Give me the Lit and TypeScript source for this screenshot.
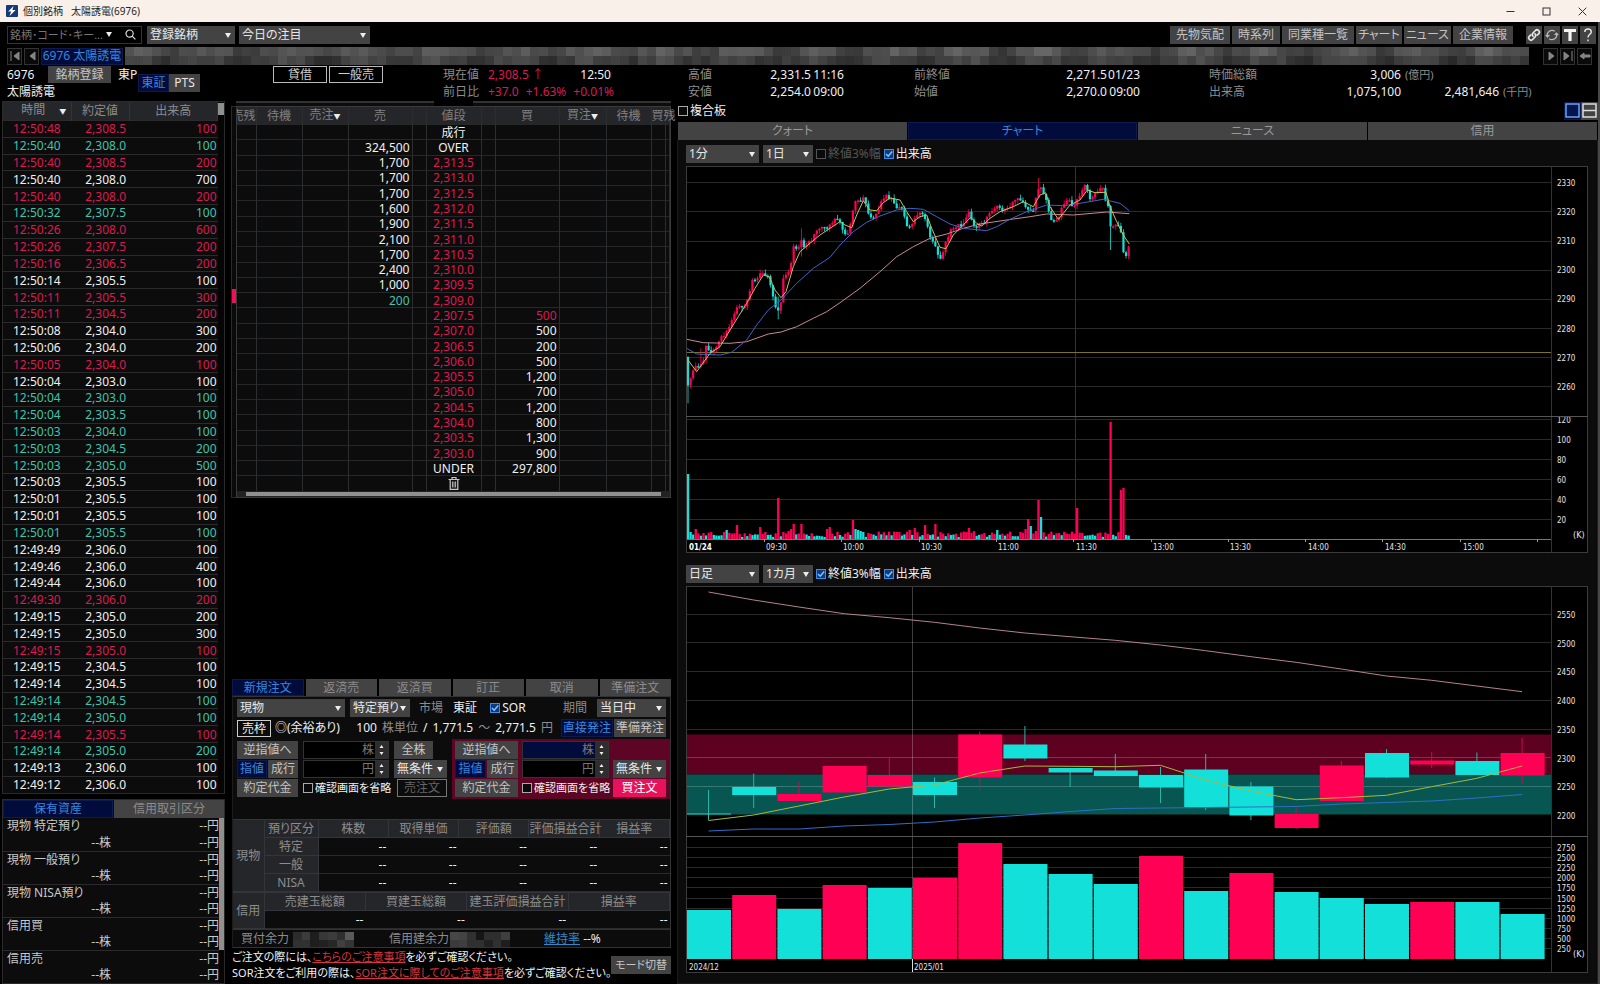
import { LitElement, html, svg, css } from "lit";
import { customElement } from "lit/decorators.js";

const RED = "#ff0055";
const TEAL = "#14e0da";

/* ---------- shared look ---------- */
const base = css`
  * { box-sizing: border-box; }
  :host {
    font-family: "Noto Sans", "Noto Sans CJK JP", sans-serif;
    font-size: 12px;
    line-height: 16px;
    font-feature-settings: "palt";
    color: #f0f0f0;
    white-space: nowrap;
  }
  button, select, input { font: inherit; font-feature-settings: inherit; color: inherit; margin: 0; padding: 0; border: 0; border-radius: 0; outline: 0; }
  button { display: flex; align-items: center; justify-content: center; background: #434343; color: #c4c4c4; height: 18px; padding: 0 6px; line-height: 16px; white-space: nowrap; }
  button.on { background: #020c3c; color: #3787dd; box-shadow: inset 0 0 0 1px #0c1a4c; }
  table { border-collapse: collapse; border-spacing: 0; table-layout: fixed; width: 100%; }
  th, td { padding: 0; font-weight: 400; }
  .sel { position: relative; display: block; height: 18px; background: #434343; }
  .sel select { appearance: none; width: 100%; height: 18px; padding: 0 10px 0 3px; background: transparent; color: #e8e8e8; line-height: 16px; }
  .sel::after { content: ""; position: absolute; right: 4px; top: 7px; border: 3px solid transparent; border-top: 5px solid #eee; border-bottom: 0; pointer-events: none; }
  .tick { display: flex; align-items: center; gap: 2px; }
  .tick input { appearance: none; flex: none; width: 10px; height: 10px; border: 1px solid #aaa; background: #0a0a0a; }
  .tick input:checked { border-color: #3a8ee6; background: #123a78 url('data:image/svg+xml,<svg xmlns="http://www.w3.org/2000/svg" viewBox="0 0 8 8"><path d="M1 4l2.2 2.2L7.2 1.6" fill="none" stroke="%237cc0ff" stroke-width="1.6"/></svg>'); }
  .tick.dim { color: #555; }
  .tick.dim input { border-color: #555; }
  .r { color: #dc1a52; }
  .t { color: #3fc4ae; }
  .w { color: #f0f0f0; }
  .g { color: #8c8c8c; }
`;

const dropdown = (label: string, value: string, cls = "") => html`
  <label class="sel ${cls}"><select aria-label=${label}><option>${value}</option></select></label>`;
const tick = (text: string, checked = false, cls = "") => html`
  <label class="tick ${cls}"><input type="checkbox" .checked=${checked}><span>${text}</span></label>`;

/* masked values are shown as a mosaic of grey cells */
const mosaic = (cols: number, cell: number, seed: number, low: number, high: number) => {
  const cells = [];
  for (let r = 0; r < 2; r++) {
    for (let c = 0; c < cols; c++) {
      const n = Math.abs(Math.sin((c + 1) * 12.9898 + r * 4.1 + seed) * 43758.5453) % 1;
      const wave = 0.5 + 0.5 * Math.sin(c * 0.75 + seed);
      const g = Math.round((low + (0.5 * n + 0.5 * wave) * (high - low)) * (r ? 0.8 : 1));
      cells.push(svg`<rect x=${c * cell} y=${r * 9} width=${cell} height="9" fill="rgb(${g},${g},${g + 1})"/>`);
    }
  }
  return html`<svg class="mosaic" viewBox="0 0 ${cols * cell} 18" preserveAspectRatio="none" shape-rendering="crispEdges" aria-hidden="true">${cells}</svg>`;
};

/* ---------- executions ---------- */
const TRADES = `50:48 8.5 r 100|50:40 8.0 t 100|50:40 8.5 r 200|50:40 8.0 w 700|50:40 8.0 r 200|50:32 7.5 t 100|50:26 8.0 r 600|50:26 7.5 r 200|50:16 6.5 r 200|50:14 5.5 w 100|50:11 5.5 r 300|50:11 4.5 r 200|50:08 4.0 w 300|50:06 4.0 w 200|50:05 4.0 r 100|50:04 3.0 w 100|50:04 3.0 t 100|50:04 3.5 t 100|50:03 4.0 t 100|50:03 4.5 t 200|50:03 5.0 t 500|50:03 5.5 w 100|50:01 5.5 w 100|50:01 5.5 w 100|50:01 5.5 t 100|49:49 6.0 w 100|49:46 6.0 w 400|49:44 6.0 w 100|49:30 6.0 r 200|49:15 5.0 w 200|49:15 5.0 w 300|49:15 5.0 r 100|49:15 4.5 w 100|49:14 4.5 w 100|49:14 4.5 t 100|49:14 5.0 t 100|49:14 5.5 r 100|49:14 5.0 t 200|49:13 6.0 w 100|49:12 6.0 w 100`
  .split("|").map((s) => s.split(" "));

@customElement("trade-tape")
class TradeTape extends LitElement {
  static styles = [base, css`
    :host { display: flex; border: 1px solid #2a2a2a; background: #0c0c0c; }
    .wrap { flex: 1; min-width: 0; }
    table { height: 100%; }
    .c1 { width: 68px; } .c2 { width: 58px; }
    thead th { height: 18px; background: #25262a; color: #8c8c8c; border-right: 1px solid #33343a; line-height: 16px; }
    thead span { font-size: 7px; color: #eee; margin-left: 14px; margin-right: -14px; }
    tbody tr { border-top: 1px solid #2b2b2b; }
    td { text-align: right; line-height: 15px; }
    td:first-child { text-align: left; padding-left: 10px; }
    td:nth-child(2) { padding-right: 3px; }
    td:last-child { padding-right: 1px; }
    .bar { width: 6px; background: #050505; padding-top: 1px; }
    .thumb { height: 12px; background: #8f8f8f; }
  `];
  render() {
    return html`<div class="wrap"><table>
      <colgroup><col class="c1"><col class="c2"><col></colgroup>
      <thead><tr><th>時間<span>▼</span></th><th>約定値</th><th>出来高</th></tr></thead>
      <tbody>${TRADES.map(([t, p, c, v]) => html`<tr class=${c}><td>12:${t}</td><td>2,30${p}</td><td>${v}</td></tr>`)}</tbody>
    </table></div><div class="bar"><div class="thumb"></div></div>`;
  }
}

@customElement("holdings-list")
class HoldingsList extends LitElement {
  static styles = [base, css`
    :host { display: block; border: 1px solid #2a2a2a; background: #0c0c0c; }
    .tabs { display: grid; grid-template-columns: 1fr 1fr; gap: 1px; }
    .tabs button { color: #8c8c8c; }
    .tabs button.on { color: #3787dd; }
    .body { display: flex; }
    .list { flex: 1; }
    .item { display: grid; grid-template-columns: 107px 1fr; line-height: 16px; padding: 0 0 0 4px; height: 33px; color: #c8c8c8; }
    .item + .item { border-top: 1px solid #2b2b2b; }
    .item span:nth-child(2), .item span:nth-child(4) { text-align: right; }
    .item span:nth-child(3) { text-align: right; padding-right: 3px; }
    .bar { width: 5px; background: #050505; }
    .thumb { height: 80%; background: #8f8f8f; }
  `];
  render() {
    return html`
      <div class="tabs"><button class="on">保有資産</button><button>信用取引区分</button></div>
      <div class="body"><div class="list">
        ${["現物 特定預り", "現物 一般預り", "現物 NISA預り", "信用買", "信用売"].map((n) => html`
          <div class="item"><span>${n}</span><span>--円</span><span>--株</span><span>--円</span></div>`)}
      </div><div class="bar"><div class="thumb"></div></div></div>`;
  }
}

/* ---------- order book ---------- */
type Level = [string, string, string, string?];
const LEVELS: Level[] = [
  ["", "成行", ""], ["324,500", "OVER", ""],
  ["1,700", "2,313.5", ""], ["1,700", "2,313.0", ""], ["1,700", "2,312.5", ""], ["1,600", "2,312.0", ""],
  ["1,900", "2,311.5", ""], ["2,100", "2,311.0", ""], ["1,700", "2,310.5", ""], ["2,400", "2,310.0", ""],
  ["1,000", "2,309.5", ""], ["200", "2,309.0", "", "t"],
  ["", "2,307.5", "500", "r"], ["", "2,307.0", "500"], ["", "2,306.5", "200"], ["", "2,306.0", "500"],
  ["", "2,305.5", "1,200"], ["", "2,305.0", "700"], ["", "2,304.5", "1,200"], ["", "2,304.0", "800"],
  ["", "2,303.5", "1,300"], ["", "2,303.0", "900"], ["", "UNDER", "297,800"],
];

@customElement("order-book")
class OrderBook extends LitElement {
  static styles = [base, css`
    :host { display: block; color: #f0f0f0; }
    .top { display: grid; grid-template-columns: 198px 1fr; column-gap: 39px; margin-left: 5px; height: 5px; }
    .top i { height: 5px; background: #0c0c0c; border-top: 2px solid #333; }
    .main { display: flex; }
    .gauge { width: 5px; border: solid #2a2a2a; border-width: 1px 0 1px 1px; background: #0a0a0a; padding-top: 182px; }
    .gauge i { display: block; height: 14px; background: #f0105a; }
    .col { flex: 1; min-width: 0; border: 1px solid #3a3a3a; background: #0c0c0c; }
    table { height: 384px; }
    th { height: 16px; background: #25262a; color: #808080; line-height: 15px; }
    th, td { border-right: 1px solid #2c2d2e; }
    th span { font-size: 7px; color: #eee; }
    tbody tr { border-top: 1px solid #262727; }
    td { line-height: 13px; text-align: right; padding-right: 2px; }
    td.p { text-align: center; padding: 0; }
    .cut { display: flex; justify-content: flex-end; overflow: hidden; }
    .trash { display: block; margin: 0 auto; width: 12px; height: 13px; }
    .scroll { height: 6px; background: #222; padding: 1px 9px; }
    .scroll i { display: block; height: 4px; background: #8f8f8f; }
  `];
  render() {
    const widths = [19, 46, 46, 64, 14, 55, 14, 64, 47, 45, 14];
    return html`
      <div class="top"><i></i><i></i></div>
      <div class="main"><div class="gauge"><i></i></div><div class="col"><table>
        <colgroup>${widths.map((w) => html`<col style="width:${w}px">`)}<col></colgroup>
        <thead><tr><th><div class="cut">売残</div></th><th>待機</th><th>売注<span>▼</span></th><th>売</th><th></th><th>値段</th><th></th><th>買</th><th>買注<span>▼</span></th><th>待機</th><th colspan="2">買残</th></tr></thead>
        <tbody>
          ${LEVELS.map(([s, p, b, c]) => html`<tr><td></td><td></td><td></td><td class=${c ?? "w"}>${s}</td><td></td>
            <td class="p ${/^\d/.test(p) ? "r" : "w"}">${p}</td><td></td><td class=${c ?? "w"}>${b}</td><td></td><td></td><td></td><td></td></tr>`)}
          <tr><td></td><td></td><td></td><td></td><td></td><td class="p">
            <svg class="trash" viewBox="0 0 12 13" fill="none" stroke="#c8c8c8"><path d="M.5 2.5h11M4 2.5v-2h4v2M2.2 3v9.3h7.6V3" stroke-width="1.2"/><path d="M4.4 4.5v6M6 4.5v6M7.6 4.5v6" stroke-width=".9"/></svg>
          </td><td></td><td></td><td></td><td></td><td></td><td></td></tr>
        </tbody>
      </table><div class="scroll"><i></i></div></div></div>`;
  }
}

/* ---------- order entry ---------- */
@customElement("order-form")
class OrderForm extends LitElement {
  static styles = [base, css`
    :host { display: block; margin-left: 1px; }
    .tabs { display: grid; grid-template-columns: repeat(6, 1fr); gap: 2px; }
    .tabs button { height: 17px; color: #8c8c8c; padding: 0; }
    .tabs button.on { color: #3787dd; }
    .panel { background: #0c0c0c; border: 1px solid #333; border-left-color: #1c1c1c; }
    .row { display: flex; align-items: center; height: 18px; margin: 2px 4px; }
    .grow { flex: 1; }
    .m1 { width: 108px; margin-right: 5px; } .m2 { width: 60px; margin-right: 9px; } .m3 { width: 69px; }
    .gap { margin-right: 10px; }
    .frame { border: 1px solid #ccc; padding: 0 4px; line-height: 15px; height: 17px; margin-right: 4px; }
    .seg button { padding: 0 2px; }
    .seg { display: flex; gap: 1px; margin-left: 8px; }
    .qty { display: flex; gap: 5px; }
    .sides { display: grid; grid-template-columns: 219px 1fr; }
    .side { display: grid; grid-template-columns: 61px 86px 53px; column-gap: 5px; row-gap: 1px; padding: 2px 4px; }
    .buy { background: #5e0424; padding: 2px 4px 2px 3px; grid-template-columns: 63px 87px 1fr; column-gap: 4px; }
    .side .tick { font-size: 11px; }
    .pair { display: grid; grid-template-columns: 1fr 1fr; gap: 1px; }
    .pair button, .side button { padding: 0; }
    .field { display: flex; height: 18px; border: 1px solid #333; background: #000; color: #777; }
    .field input { flex: 1; min-width: 0; width: 0; background: transparent; }
    .field.on { background: #020c3c; }
    .field span { padding-right: 1px; line-height: 16px; }
    .spin { width: 13px; height: 16px; flex: none; background: #2e2e2e; padding: 0; }
    .side .all { width: 39px; }
    .sell button.send { background: #0c0c0c; border: 1px solid #777; color: #666; margin-left: 3px; }
    .buy button.send { background: #e8115c; color: #fff; }
    .gapbox { height: 20px; }
    .assets th { background: #25262a; color: #8c8c8c; border: 1px solid #34353a; border-width: 0 1px 1px 0; height: 18px; line-height: 16px; }
    .assets td { height: 18px; border-bottom: 1px solid #2b2b2b; text-align: right; line-height: 16px; padding-right: 2px; }
    .assets tr:first-child th { border-top-width: 1px; }
    .k { width: 31px; } .k2 { width: 54px; }
    .sum { display: grid; grid-template-columns: 60px 61px 96px 60px 1fr; align-items: center; height: 18px; padding-top: 1px; color: #8c8c8c; border-top: 1px solid #333; }
    .sum span:first-child { padding-left: 8px; }
    .sum span:nth-of-type(2) { padding-left: 35px; }
    .sum p { margin: 0 0 0 34px; color: #eee; }
    .mosaic { display: block; width: 100%; height: 15px; }
    a { color: #3787c8; }
    .notes { display: flex; align-items: center; justify-content: space-between; font-size: 11px; padding: 1px 0 3px; }
    .notes p { margin: 0; line-height: 16px; }
    .notes a { color: #d8353f; }
    .notes button { font-size: 11px; width: 62px; padding: 0; }
  `];
  private field(unit: string, label: string, on = false) {
    return html`<label class="field ${on ? "on" : ""}"><input type="text" aria-label=${label}><span>${unit}</span>
      <button class="spin" aria-label="増減"><svg width="7" height="12" viewBox="0 0 7 12" fill="#eee"><path d="M3.5 1L5.500 4h-4zM3.500 11L5.500 8h-4z"/></svg></button></label>`;
  }
  private side(cls: string, action: string, buy: boolean) {
    return html`<div class="side ${cls}">
      <button>逆指値へ</button>${this.field("株", action + " 株数", buy)}${buy ? html`<span></span>` : html`<button class="all">全株</button>`}
      <div class="pair"><button class="on">指値</button><button>成行</button></div>${this.field("円", action + " 価格")}${dropdown("条件", "無条件")}
      <button>約定代金</button>${tick("確認画面を省略")}<button class="send">${action}</button>
    </div>`;
  }
  render() {
    return html`
      <div class="tabs">${["新規注文", "返済売", "返済買", "訂正", "取消", "準備注文"].map((t, i) => html`<button class=${i ? "" : "on"}>${t}</button>`)}</div>
      <div class="panel">
        <div class="row">
          ${dropdown("取引", "現物", "m1")}${dropdown("預り", "特定預り", "m2")}<span class="g gap">市場</span><span class="grow">東証</span>
          ${tick("SOR", true)}<span class="grow"></span><span class="g gap">期間</span>${dropdown("期間", "当日中", "m3")}
        </div>
        <div class="row">
          <span class="frame">売枠</span><span>◎(余裕あり)</span><span class="grow"></span>
          <span class="qty"><span>100</span><span class="g">株単位</span><span>/</span><span>1,771.5</span><span class="g">～</span><span>2,771.5</span><span class="g">円</span></span>
          <span class="seg"><button class="on">直接発注</button><button>準備発注</button></span>
        </div>
        <div class="sides">${this.side("sell", "売注文", false)}${this.side("buy", "買注文", true)}</div>
        <div class="gapbox"></div>
        <table class="assets">
          <colgroup><col class="k"><col class="k2"><col><col><col><col><col></colgroup>
          <tbody>
            <tr><th rowspan="4">現物</th><th>預り区分</th><th>株数</th><th>取得単価</th><th>評価額</th><th>評価損益合計</th><th>損益率</th></tr>
            ${["特定", "一般", "NISA"].map((n) => html`<tr><th>${n}</th><td>--</td><td>--</td><td>--</td><td>--</td><td>--</td></tr>`)}
          </tbody>
        </table>
        <table class="assets">
          <colgroup><col class="k"><col><col><col><col></colgroup>
          <tbody>
            <tr><th rowspan="2">信用</th><th>売建玉総額</th><th>買建玉総額</th><th>建玉評価損益合計</th><th>損益率</th></tr>
            <tr><td>--</td><td>--</td><td>--</td><td>--</td></tr>
          </tbody>
        </table>
        <div class="sum"><span>買付余力</span>${mosaic(7, 9, 3, 15, 95)}<span>信用建余力</span>${mosaic(7, 9, 8, 15, 95)}<p><a href="#">維持率</a> --%</p></div>
      </div>
      <div class="notes"><div>
        <p>ご注文の際には、<a href="#">こちらのご注意事項</a>を必ずご確認ください。</p>
        <p>SOR注文をご利用の際は、<a href="#">SOR注文に際してのご注意事項</a>を必ずご確認ください。</p>
      </div><button>モード切替</button></div>`;
  }
}

/* ---------- charts ---------- */
type Pt = [number, number];
const pts = (s: string): Pt[] => s.split(" ").map((p) => p.split(",").map(Number) as Pt);
/* curve data is kept at three units per chart pixel */
const toPlot = ([x, y]: Pt): Pt => [x / 3 - 6, y / 3 - 6];
const line = (list: Pt[], color: string) =>
  svg`<polyline points=${list.map((p) => p.map((v) => v.toFixed(1)).join()).join(" ")} fill="none" stroke=${color} stroke-width="1"/>`;

const CLOSES = pts("24,676 33,655 45,612 60,620 70,600 78,560 95,575 110,562 125,530 140,515 155,480 175,430 185,450 200,430 210,390 220,350 228,368 240,335 262,345 270,370 280,420 292,455 303,430 310,350 330,330 342,250 352,275 362,240 372,260 395,240 410,215 425,205 440,210 455,190 475,170 488,215 500,225 512,190 520,150 530,115 537,130 548,105 560,145 570,170 585,175 600,130 615,105 640,120 650,140 662,135 675,175 685,205 700,190 708,160 730,165 742,195 752,240 765,250 775,295 785,290 795,255 812,210 830,200 845,195 860,165 868,150 878,190 888,210 900,190 915,185 935,150 955,140 970,155 990,135 1005,125 1020,115 1035,130 1040,160 1050,145 1060,150 1076,80 1090,95 1100,130 1108,160 1118,185 1135,175 1150,130 1165,115 1180,140 1188,130 1205,90 1217,75 1230,120 1240,110 1265,75 1275,115 1285,140 1292,200 1305,200 1320,190 1328,260 1335,300 1348,255");
const SHORT = pts("24,600 50,635 90,580 120,560 150,510 175,470 200,430 225,385 250,345 268,350 285,390 303,413 318,395 340,320 360,275 390,250 420,225 450,205 480,185 495,195 515,203 530,165 550,122 570,150 590,152 610,128 630,114 660,120 680,155 700,185 720,170 740,165 755,205 780,262 798,266 820,225 850,195 872,172 890,190 905,198 930,175 960,155 1000,140 1030,125 1060,140 1080,105 1097,98 1110,140 1135,178 1150,160 1170,135 1200,120 1222,90 1245,98 1278,97 1290,140 1310,185 1330,225 1348,252");
const MID = pts("20,565 50,582 120,585 155,577 200,540 230,495 265,450 303,420 350,370 400,325 450,292 480,255 520,215 560,187 600,168 650,150 690,145 730,148 770,170 810,192 850,205 920,212 950,200 990,178 1040,155 1100,135 1150,137 1200,130 1270,118 1320,130 1348,152");
const LONG = pts("20,538 70,548 150,550 200,545 265,522 303,516 350,500 400,475 440,455 480,428 540,385 600,335 650,290 700,260 750,235 800,222 850,205 900,192 940,186 1000,177 1050,170 1100,162 1180,165 1280,156 1348,161");
const SPIKES: Record<number, [number, string?]> = {
  0: [65, TEAL], 1: [7, TEAL], 3: [10], 15: [9], 19: [14], 28: [12], 35: [41, RED], 39: [8, RED], 40: [10, RED], 41: [15, RED], 44: [15, RED], 54: [10, RED], 55: [12, RED],
  64: [19, RED], 65: [10, TEAL], 66: [9, TEAL], 67: [8, TEAL], 68: [7, TEAL], 86: [9, RED], 88: [11], 92: [14, RED], 96: [15, RED], 109: [11], 111: [8], 120: [9],
  131: [10, RED], 132: [20, RED], 133: [13, TEAL], 135: [8, RED], 136: [39, RED], 137: [22, TEAL], 151: [31, RED], 164: [117, RED], 168: [49, RED], 169: [51, RED],
};
const EXTREMES: Record<number, [number, number]> = { 0: [596, 730], 5: [565, 625], 35: [410, 478], 44: [205, 290], 136: [54, 100], 164: [135, 270] };

const intraday = () => {
  const at = (x: number) => {
    const i = Math.max(1, CLOSES.findIndex(([px]) => px >= x));
    const [[x0, y0], [x1, y1]] = [CLOSES[i - 1], CLOSES[i]];
    return y0 + ((y1 - y0) * (x - x0)) / (x1 - x0);
  };
  const out = [];
  let open = 590;
  for (let i = 0; i < 172; i++) {
    const x = 24 + i * 7.73;
    const n = Math.abs(Math.sin(i * 78.233 + 2) * 43758.5453) % 1;
    const close = at(Math.min(x, 1347)) + (n - 0.5) * 12;
    const color = close <= open ? RED : TEAL;
    const [hi, lo] = EXTREMES[i] ?? [Math.min(open, close) - n * 12, Math.max(open, close) + (1 - n) * 12];
    const px = x / 3 - 6;
    const top = Math.min(open, close) / 3 - 6;
    const h = Math.max(1.5, Math.abs(close - open) / 3);
    const [vol, vc] = SPIKES[i] ?? [2 + n * 5.5];
    out.push(svg`<rect x=${px - 0.4} y=${hi / 3 - 6} width=".8" height=${(lo - hi) / 3} fill=${color}/>
      <rect x=${px - 1.1} y=${top} width="2.2" height=${h} fill=${color}/>
      <rect x=${px - 1.1} y=${373 - vol} width="2.3" height=${vol} fill=${vc ?? (n > 0.5 ? RED : TEAL)}/>`);
    open = close;
  }
  return out;
};

/* [top, bottom, high, low, rising] in page rows, with the volume bar's top and direction */
const DAYS: [number, number, number, number, number, number, number][] = [
  [813.5, 814.5, 790, 820, 0, 910, 0], [787, 795, 773.5, 808, 0, 895, 1], [794, 801, 782, 801, 1, 909, 0],
  [766, 792.5, 766, 793, 1, 885, 1], [775, 786.5, 757.5, 787, 1, 888, 0], [782, 795, 777.5, 808, 0, 878, 1],
  [734.5, 777.5, 731.5, 790, 1, 843, 1], [744.5, 758.5, 726, 761, 0, 864, 0], [768, 772.5, 768, 787, 0, 874, 0],
  [770.5, 776, 754, 776, 0, 884, 0], [775, 787.5, 767, 803, 0, 856, 1], [769.5, 807, 754, 810, 0, 891, 0],
  [786.5, 815.5, 782, 820, 0, 873, 1], [814, 828, 808, 829, 1, 892, 0], [765.5, 801, 761, 801, 1, 898, 0],
  [753, 777.5, 749, 778, 0, 904, 0], [760.5, 764.5, 752, 768, 1, 902, 1], [761, 775, 752.5, 775, 0, 902, 0],
  [753, 775.5, 738, 784, 1, 914, 0],
];
const daily = (values: number[]): Pt[] => values.map((v, i) => [22.5 + i * 45.2, v - 586]);
const D_LONG = daily([592, 600, 607, 613.7, 617.7, 622.3, 628, 633, 636.7, 640.3, 645, 650.7, 656.7, 662.3, 669, 676, 680.3, 686, 691.7]);
const D_SHORT = daily([820.5, 815, 806, 797, 789, 785, 773, 766, 766.3, 766.7, 765.3, 780, 791, 799.7, 797.7, 795.3, 786.7, 778.3, 766]);
const D_MID = daily([831, 829, 829, 826, 824.5, 822, 818, 815, 811.5, 808.5, 808, 807.5, 807, 806.5, 804, 802.5, 801, 798, 794.5]);

const hgrid = (ys: number[]) => ys.map((y) => svg`<path d="M1 ${Math.round(y) + 0.5}H865" stroke="#2a2a2a"/>`);
const labels = (list: [string | number, number][]) => list.map(([t, y]) => svg`<text x="871" y=${y + 4}>${t}</text>`);
const frame = (split: number) => svg`<rect x=".5" y=".5" width="901" height="386" fill="none" stroke="#3c3c3c"/>
  <path d="M865.5 0V387" stroke="#333"/><path d="M0 ${split}.5H902" stroke="#555"/>`;
const range = (n: number) => Array.from({ length: n }, (_, i) => i);

@customElement("chart-panel")
class ChartPanel extends LitElement {
  static styles = [base, css`
    :host { display: flex; flex-direction: column; min-width: 0; }
    .head { display: flex; align-items: center; justify-content: space-between; height: 21px; padding: 0 0 2px 1px; }
    .views { display: flex; }
    .views button { width: 17px; height: 18px; padding: 0; }
    .tabs { display: grid; grid-template-columns: repeat(4, 1fr); gap: 1px; padding: 0 1px; }
    .tabs button { height: 18px; color: #999; }
    .tabs button.on { color: #3787dd; }
    .panel { flex: 1; background: #0c0c0c; border: 1px solid #1c1c1c; border-top: 0; padding: 0 9px 0 8px; }
    .tools { display: flex; align-items: center; gap: 3px; height: 26px; padding-top: 1px; }
    .tools.second { height: 33px; padding-top: 8px; align-items: center; }
    .s1 { width: 73px; margin-right: 1px; } .s2 { width: 50px; }
    .chart { display: block; width: 100%; background: #000; font-family: "DejaVu Sans Condensed", "Noto Sans", sans-serif; font-size: 8px; }
    .chart text { fill: #e4e4e4; }
    .chart .unit { font-size: 9px; }
    .chart .strong { font-weight: 700; fill: #fff; }
  `];
  render() {
    return html`
      <div class="head">${tick("複合板")}<div class="views">
        <button class="on" aria-label="1画面"><svg width="15" height="15" viewBox="0 0 15 15"><rect x="1" y="1" width="13" height="13" fill="#021550" stroke="#6ea4e8" stroke-width="1.5"/></svg></button>
        <button aria-label="2画面"><svg width="15" height="15" viewBox="0 0 15 15" fill="none" stroke="#ddd" stroke-width="1.5"><rect x="1" y="1" width="13" height="13"/><path d="M1 7.5h13"/></svg></button>
      </div></div>
      <div class="tabs">${["クォート", "チャート", "ニュース", "信用"].map((t, i) => html`<button class=${i === 1 ? "on" : ""}>${t}</button>`)}</div>
      <div class="panel">
        <div class="tools">${dropdown("足種", "1分", "s1")}${dropdown("期間", "1日", "s2")}${tick("終値3%幅", false, "dim")}${tick("出来高", true)}</div>
        <svg class="chart" viewBox="0 0 902 387" role="img" aria-label="1分足チャート">
          ${hgrid([...range(8).map((i) => 16.3 + i * 29.1), ...range(6).map((i) => 253 + i * 20)])}
          <path d="M389.5 1V374" stroke="#333"/>
          <path d="M1 186.5H865" stroke="#7d7320"/>
          ${intraday()}
          ${line(LONG.map(toPlot), "#c98a92")}${line(MID.map(toPlot), "#3f62c8")}${line(SHORT.map(toPlot), "#c9c04e")}
          <path d="M1 373.5H865" stroke="#777"/>
          ${range(11).map((i) => svg`<path d="M${Math.round(i * 77.3 + 78)}.5 373v3" stroke="#999"/>`)}
          ${labels(range(8).map((i) => [2330 - i * 10, 16 + i * 29.1] as [number, number]))}
          ${labels([[120, 253], [100, 273], [80, 293], [60, 313], [40, 333], [20, 353]])}
          <text class="unit" x="887" y="372">(K)</text>
          <text class="strong" x="3" y="384">01/24</text>
          ${["09:30", "10:00", "10:30", "11:00", "11:30", "13:00", "13:30", "14:00", "14:30", "15:00"].map((t, i) => svg`<text x=${80 + Math.round(i * 77.4)} y="384">${t}</text>`)}
          ${frame(250)}
        </svg>
        <div class="tools second">${dropdown("足種", "日足", "s1")}${dropdown("期間", "1カ月", "s2")}${tick("終値3%幅", true)}${tick("出来高", true)}</div>
        <svg class="chart" viewBox="0 0 902 387" role="img" aria-label="日足チャート">
          <rect x="1" y="148.5" width="864" height="40" fill="#5e001f"/>
          <rect x="1" y="188.5" width="864" height="40" fill="#075652"/>
          ${hgrid([...range(5).map((i) => 27.5 + i * 28.8), ...range(11).map((i) => 261 + i * 10.1)])}
          ${[171, 200].map((y) => svg`<path d="M1 ${y}.5H865" stroke="#fff" stroke-opacity=".2"/>`)}
          <path d="M226.5 1V373" stroke="#fff" stroke-opacity=".24"/><path d="M226.5 373V387" stroke="#ddd"/>
          ${DAYS.map(([top, bottom, high, low, up, vol, vup], i) => {
            const x = 1 + i * 45.2;
            const c = up ? RED : TEAL;
            return svg`<rect x=${x + 21} y=${high - 586} width="1" height=${low - high} fill=${up ? "#c40f4c" : "#2bb5a6"}/>
              <rect x=${x} y=${top - 586} width="44" height=${bottom - top} fill=${c}/>
              <rect x=${x} y=${vol - 586} width="44" height=${959 - vol} fill=${vup ? RED : TEAL}/>`;
          })}
          ${line(D_LONG, "#b5838a")}${line(D_MID, "#2f6fc4")}${line(D_SHORT, "#a8b83c")}
          ${labels(range(8).map((i) => [2550 - i * 50, 28 + i * 28.7] as [number, number]))}
          ${labels(range(11).map((i) => [2750 - i * 250, 261 + i * 10.1] as [number, number]))}
          <text class="unit" x="887" y="371">(K)</text>
          <text x="3" y="384">2024/12</text><text x="228" y="384">2025/01</text>
          ${frame(250)}
        </svg>
      </div>`;
  }
}

/* ---------- window ---------- */
const glyph = (d: string) => html`<svg width="12" height="12" viewBox="0 0 12 12" fill="#858585" stroke="#858585">${svg`<path d=${d}/>`}</svg>`;
const KANA_BUTTONS = ["チャート", "ニュース"];

@customElement("app-root")
class AppRoot extends LitElement {
  static styles = [base, css`
    :host { display: flex; flex-direction: column; min-height: 100vh; background: #000; border-right: 2px solid #4a4744; border-bottom: 2px solid #3a3836; }
    .title { display: flex; align-items: center; height: 22px; padding-left: 6px; background: #f9f0ea; color: #222; margin-right: -2px; }
    .title h1 { display: flex; gap: 8px; margin: 0 0 0 5px; font-size: 10px; font-weight: 400; flex: 1; }
    .title button { background: none; width: 36px; height: 22px; padding: 0; }
    .bar { display: flex; align-items: center; gap: 2px; padding: 3px 2px 0 7px; height: 22px; }
    .search { display: flex; align-items: center; width: 135px; height: 18px; border: 1px solid #333; padding: 0 5px 0 2px; margin-right: 3px; }
    .search input { flex: 1; width: 0; min-width: 0; background: transparent; color: #aaa; font-size: 11px; }
    .search input::placeholder { color: #777; }
    .search i { border: 3px solid transparent; border-top: 5px solid #eee; border-bottom: 0; margin-right: 13px; }
    .s1 { width: 88px; margin-right: 2px; } .s2 { width: 131px; }
    .grow { flex: 1; }
    .bar button.ic { width: 16px; padding: 0; }
    .bar button.kana { padding: 0 2px; }
    .bar .first { margin-left: 11px; }
    .tabs { display: flex; gap: 2px; align-items: center; padding: 3px 6px 0 7px; height: 21px; }
    .tabs button { width: 15px; height: 17px; background: #0a0a0a; border: 1px solid #333; padding: 0; }
    .tabs button.cur { width: 82px; background: #020c3c; border-color: #0c1a4c; color: #3787dd; }
    .mosaic { flex: 1; min-width: 0; height: 18px; margin-right: 12px; }
    .info { display: grid; grid-template-columns: 273px 170px 245fr 226fr 295fr 391fr; height: 36px; padding-top: 1px; line-height: 17px; margin-right: -2px; }
    .name { display: flex; padding-left: 7px; }
    .id { display: grid; grid-template-columns: 41px 63px 24px; grid-template-rows: 17px 17px; }
    .id button { height: 17px; padding: 0; }
    .id span:nth-of-type(2) { padding-left: 7px; }
    .wide { grid-column: 1 / 3; }
    .ex { display: flex; padding: 8px 0 0 3px; }
    .ex button { width: 31px; padding: 0; color: #e8e8e8; }
    .ex button.on { color: #3787dd; }
    .tags { display: flex; gap: 2px; }
    .tags span { border: 1px solid #bbb; width: 54px; height: 17px; line-height: 15px; text-align: center; color: #ccc; }
    .q { display: grid; grid-template-rows: 17px 17px; }
    .now { grid-template-columns: 45px 78px 45px; }
    .chg { display: flex; gap: 7px; grid-column: 2 / 4; }
    .high { grid-template-columns: 45px 78px 33px; }
    .prev { grid-template-columns: 45px 148px 33px; }
    .cap { grid-template-columns: 60px 132px 98px 40px; }
    .n { text-align: right; }
    .u { font-size: 11px; color: #8c8c8c; padding-left: 4px; }
    .body { flex: 1; display: grid; grid-template-columns: 223px 440px minmax(0, 1fr); gap: 6px; padding: 0 0 0 2px; }
    .stack { display: flex; flex-direction: column; justify-content: space-between; gap: 5px; min-width: 0; }
    .stack trade-tape { flex: 1; }
  `];
  render() {
    return html`
      <header class="title">
        <svg width="12" height="12" viewBox="0 0 12 12"><rect width="12" height="12" rx="1" fill="#143a78"/><path d="M7.6 1L2.2 6.4h2.9L3.6 11l6-6H6.4z" fill="#fff"/></svg>
        <h1><span>個別銘柄</span><span>太陽誘電(6976)</span></h1>
        <button aria-label="最小化"><svg width="9" height="9" viewBox="0 0 9 9"><path d="M.5 4.5h8" stroke="#333"/></svg></button>
        <button aria-label="最大化"><svg width="9" height="9" viewBox="0 0 9 9"><rect x="1" y="1" width="7" height="7" fill="none" stroke="#333"/></svg></button>
        <button aria-label="閉じる"><svg width="9" height="9" viewBox="0 0 9 9"><path d="M.7.7l7.6 7.6M8.3.7L.7 8.3" stroke="#333"/></svg></button>
      </header>
      <div class="bar">
        <label class="search"><input type="text" aria-label="銘柄検索" placeholder="銘柄･コード･キー..."><i></i>
          <svg width="11" height="11" viewBox="0 0 11 11" fill="none" stroke="#ddd" stroke-width="1.2"><circle cx="4.6" cy="4.6" r="3.6"/><path d="M7.2 7.2l3.2 3.2"/></svg></label>
        ${dropdown("銘柄リスト", "登録銘柄", "s1")}${dropdown("注目", "今日の注目", "s2")}
        <span class="grow"></span>
        ${["先物気配", "時系列", "同業種一覧", "チャート", "ニュース", "企業情報"].map((t) => html`<button class=${KANA_BUTTONS.includes(t) ? "kana" : ""}>${t}</button>`)}
        <button class="ic first" aria-label="連動"><svg width="14" height="14" viewBox="0 0 14 14" fill="none" stroke="#e8e8e8" stroke-width="1.7" stroke-linecap="round"><path d="M6 8.2a2.4 2.4 0 0 1 0-3.2l2.4-2.5a2.3 2.3 0 0 1 3.3 3.2L10.4 7M8 5.8a2.4 2.4 0 0 1 0 3.2l-2.4 2.5a2.3 2.3 0 0 1-3.3-3.2L3.6 7"/></svg></button>
        <button class="ic" aria-label="更新"><svg width="14" height="14" viewBox="0 0 14 14" fill="none" stroke="#bbb" stroke-width="1.2"><path d="M2.5 8.4A4.7 4.7 0 0 1 9.8 3.3M11.5 5.6a4.7 4.7 0 0 1-7.3 5.1M.8 7l1.7 1.8L4.4 7M9.6 7l1.9-1.8L13.2 7"/></svg></button>
        <button class="ic" aria-label="最前面"><svg width="14" height="14" viewBox="0 0 14 14" fill="#f4f4f4"><path d="M1 1h12v3H8.6v9H5.4V4H1z"/></svg></button>
        <button class="ic" aria-label="ヘルプ"><svg width="14" height="14" viewBox="0 0 14 14" fill="none" stroke="#e8e8e8" stroke-width="1.4"><path d="M3.8 4C3.8 2 5 1 7 1s3.3 1.1 3.3 2.900C10.300 6.200 7 6.400 7 9.400M7 11.400v1.800"/></svg></button>
      </div>
      <nav class="tabs">
        <button aria-label="先頭">${glyph("M2 1v10M10 2L5 6l5 4z")}</button><button aria-label="前へ">${glyph("M9 2L4 6l5 4z")}</button>
        <button class="cur">6976 太陽誘電</button>${mosaic(156, 9, 1, 50, 105)}
        <button aria-label="次へ">${glyph("M4 2l5 4-5 4z")}</button><button aria-label="末尾">${glyph("M2 2l5 4-5 4zM10 1v10")}</button>
        <button aria-label="戻る">${glyph("M1 6l4-3v2h6v2H5v2z")}</button>
      </nav>
      <section class="info">
        <div class="name"><div class="id"><span>6976</span><button>銘柄登録</button><span>東P</span><span class="wide">太陽誘電</span></div>
          <div class="ex"><button class="on">東証</button><button>PTS</button></div></div>
        <div class="tags"><span>貸借</span><span>一般売</span></div>
        <div class="q now"><span class="g">現在値</span><span class="r">2,308.5 ↑</span><span class="n">12:50</span>
          <span class="g">前日比</span><span class="chg r"><span>+37.0</span><span>+1.63%</span><span>+0.01%</span></span></div>
        <div class="q high"><span class="g">高値</span><span class="n">2,331.5</span><span class="n">11:16</span>
          <span class="g">安値</span><span class="n">2,254.0</span><span class="n">09:00</span></div>
        <div class="q prev"><span class="g">前終値</span><span class="n">2,271.5</span><span class="n">01/23</span>
          <span class="g">始値</span><span class="n">2,270.0</span><span class="n">09:00</span></div>
        <div class="q cap"><span class="g">時価総額</span><span class="n">3,006</span><span class="u">(億円)</span><span></span>
          <span class="g">出来高</span><span class="n">1,075,100</span><span class="n">2,481,646</span><span class="u">(千円)</span></div>
      </section>
      <main class="body">
        <div class="stack"><trade-tape></trade-tape><holdings-list></holdings-list></div>
        <div class="stack"><order-book></order-book><order-form></order-form></div>
        <chart-panel></chart-panel>
      </main>`;
  }
}
